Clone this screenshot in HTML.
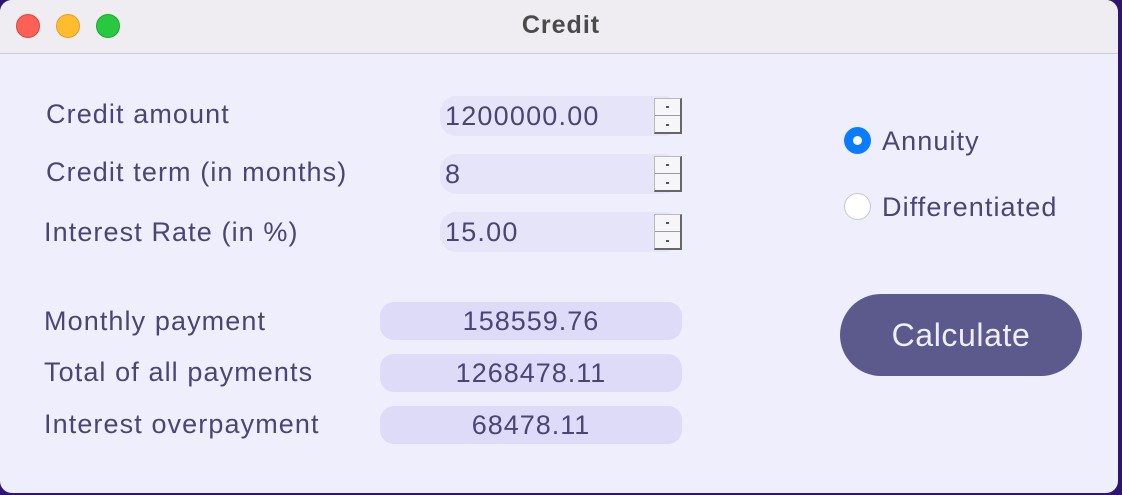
<!DOCTYPE html>
<html><head><meta charset="utf-8"><style>
*{margin:0;padding:0;box-sizing:border-box}
body{width:1122px;height:495px;background:#2e1670;overflow:hidden;font-family:"Liberation Sans",sans-serif;color:#4a4577;position:relative}
.win{position:absolute;left:0;top:0;width:1118px;height:493px;background:#efeefd;border-radius:12px;overflow:hidden}
.tb{position:absolute;left:0;top:0;width:100%;height:54px;background:#efecf2;border-bottom:1px solid #cfcdd6}
.dot{position:absolute;top:14px;width:24px;height:24px;border-radius:50%}
.title{position:absolute;top:11px;left:0;width:1122px;text-align:center;font-weight:bold;font-size:25px;letter-spacing:1px;color:#4a4a4a}
.lbl{position:absolute;font-size:27px;letter-spacing:1.1px;line-height:30px;white-space:nowrap}
.in{position:absolute;left:440px;width:240px;height:40px;background:#e6e4f8;border-radius:16px;font-size:27px;letter-spacing:1.2px;line-height:40px;padding-left:5px}
.sp{position:absolute;left:654px;width:28px;height:36px;background:#f6f6f8;border:1px solid #bbb;border-right:2px solid #666;border-bottom:2px solid #666}
.sp:after{content:"";position:absolute;left:0;right:0;top:16px;border-top:1px solid #999}
.sp i{position:absolute;left:11px;width:3px;height:2px;background:#555}
.out{position:absolute;left:380px;width:302px;height:38px;background:#dddbf8;border-radius:14px;font-size:27px;letter-spacing:1px;line-height:38px;text-align:center}
.btn{position:absolute;left:840px;top:294px;width:242px;height:82px;background:#5c5a8d;border-radius:41px;color:#eeeefd;font-size:32px;letter-spacing:0.6px;line-height:82px;text-align:center}
</style></head><body><div class="win">
<div class="tb"><div class="dot" style="left:16px;background:#fe5f57;border:1px solid #e0443e"></div><div class="dot" style="left:56px;background:#febc2e;border:1px solid #dea123"></div><div class="dot" style="left:96px;background:#28c840;border:1px solid #1aab29"></div><div class="title">Credit</div></div>
<div class="lbl" style="left:46px;top:99px">Credit amount</div>
<div class="lbl" style="left:46px;top:157px">Credit term (in months)</div>
<div class="lbl" style="left:44px;top:217px">Interest Rate (in %)</div>
<div class="in" style="top:96px">1200000.00</div><div class="sp" style="top:98px"><i style="top:7px"></i><i style="top:25px"></i></div>
<div class="in" style="top:154px">8</div><div class="sp" style="top:156px"><i style="top:7px"></i><i style="top:25px"></i></div>
<div class="in" style="top:212px">15.00</div><div class="sp" style="top:214px"><i style="top:7px"></i><i style="top:25px"></i></div>
<div class="lbl" style="left:44px;top:306px">Monthly payment</div>
<div class="lbl" style="left:44px;top:357px">Total of all payments</div>
<div class="lbl" style="left:44px;top:409px">Interest overpayment</div>
<div class="out" style="top:302px">158559.76</div>
<div class="out" style="top:354px">1268478.11</div>
<div class="out" style="top:406px">68478.11</div>
<div style="position:absolute;left:844px;top:127px;width:27px;height:27px;border-radius:50%;background:#0a7cff"><div style="position:absolute;left:9px;top:9px;width:9px;height:9px;border-radius:50%;background:#fff"></div></div>
<div class="lbl" style="left:882px;top:126px">Annuity</div>
<div style="position:absolute;left:844px;top:193px;width:27px;height:27px;border-radius:50%;background:#fff;border:1px solid #c8c8cc"></div>
<div class="lbl" style="left:882px;top:192px">Differentiated</div>
<div class="btn">Calculate</div>
</div></body></html>
